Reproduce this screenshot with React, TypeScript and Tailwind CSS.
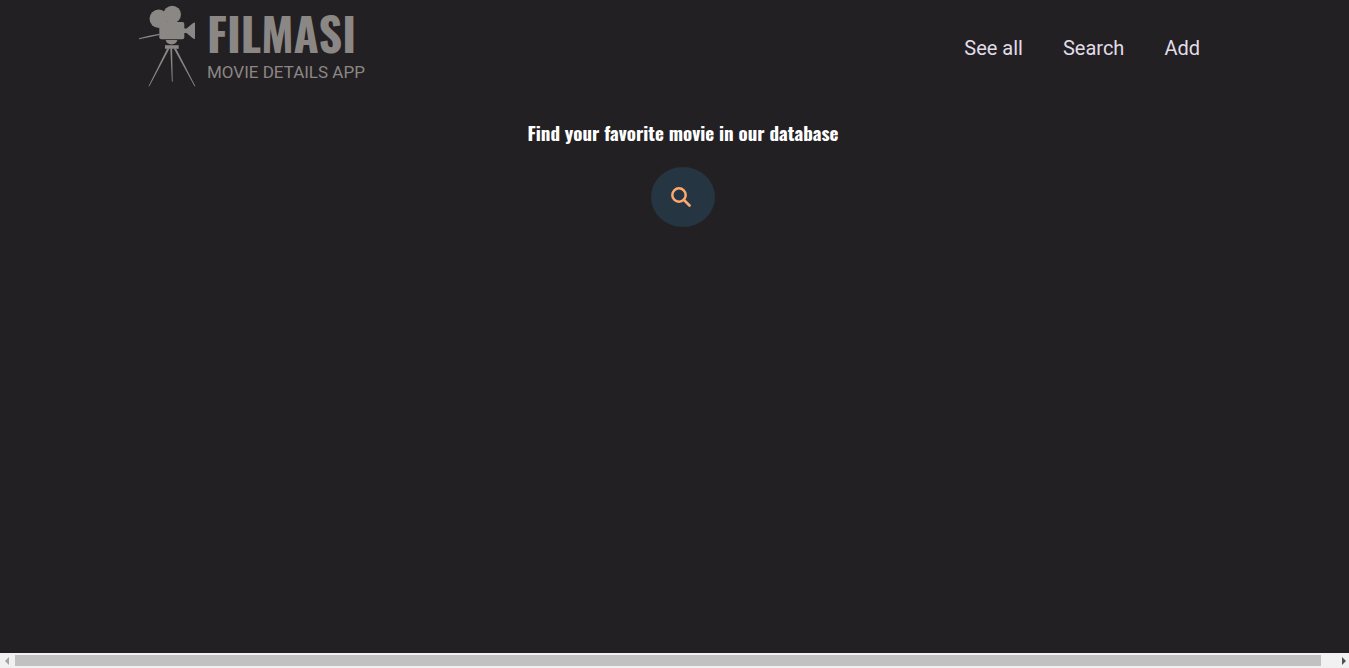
function CameraMark() {
  return (
    <svg viewBox="0 0 58 84" className="h-[84px] w-[58px] shrink-0 fill-[#8b8785]" aria-hidden="true">
      <circle cx="19.700" cy="14.700" r="9.200" />
      <circle cx="33.200" cy="10.500" r="8.800" />
      <path d="M20.300 18h23q2 0 2 2v13.300q0 2-2 2h-21q-2 0-2-2z" />
      <path d="M45 24.500h2.500l6-5q1.500-1 2.500-1v16.500q-1 0-2.500-1l-6-5H45z" />
      <path d="M20.500 29.800v1.300L11 33 0 35.200v-1l10-2.400z" />
      <path d="M26.700 36h11.600q-1 4.400-5.800 4.400T26.700 36z" />
      <path d="M26 41.200h13.700v3.600H26z" />
      <path d="M28.200 44.500h2.300L10.400 82.200h-.9z" />
      <path d="M31.300 44.500h1.800l.6 33.200h-.8z" />
      <path d="M34.800 44.500h2.300l19.300 37.700h-.9z" />
    </svg>
  );
}

function Logo() {
  return (
    <a href="#home" className="flex pt-1 text-[#8b8785]">
      <CameraMark />
      <span className="flex flex-col pl-2.5">
        <span className="font-['Oswald','Roboto',sans-serif] text-[46px] leading-14 font-bold">FILMASI</span>
        <span className="text-[17px] leading-6">MOVIE DETAILS APP</span>
      </span>
    </a>
  );
}

function SearchIcon() {
  return (
    <svg viewBox="0 0 20 20" className="size-5" fill="none" stroke="#fca96f" strokeWidth="2.500" aria-hidden="true">
      <circle cx="8" cy="8" r="6.700" />
      <path d="M13 13l5.500 5.500" strokeWidth="2.700" strokeLinecap="round" />
    </svg>
  );
}

const links = [
  { label: "See all", href: "#all" },
  { label: "Search", href: "#search" },
  { label: "Add", href: "#add" },
];

export default function App() {
  return (
    <div className="flex h-screen flex-col overflow-hidden bg-[#232023] font-['Roboto',sans-serif]">
      <div className="min-h-0 flex-1 overflow-hidden">
        <div className="w-[calc(100%+17px)]">
          <header className="flex h-24 items-start justify-between pr-[166px] pl-[139px]">
            <Logo />
            <nav className="flex h-24 items-center gap-10 text-xl text-[#e0dde9]">
              {links.map((link) => (
                <a key={link.label} href={link.href}>{link.label}</a>
              ))}
            </nav>
          </header>
          <main className="flex flex-col items-center pt-[22px]">
            <h3 className="font-['Oswald','Roboto',sans-serif] text-[19px] leading-7 font-bold text-white">
              Find your favorite movie in our database
            </h3>
            <button type="button" aria-label="Search" className="mt-[21px] flex h-15 w-16 items-center rounded-[50%] bg-[#253541] pl-5">
              <SearchIcon />
            </button>
          </main>
        </div>
      </div>
      <div className="flex h-[15px] shrink-0 items-center bg-[#f1f1f1]">
        <button type="button" aria-label="Scroll left" className="flex w-[15px] justify-center pr-0.5">
          <svg viewBox="0 0 4 8" className="h-2 w-1 fill-[#a3a3a3]"><path d="M4 0v8L0 4z" /></svg>
        </button>
        <div className="flex-1 pr-[13px]">
          <div className="h-[11px] bg-[#c1c1c1]" />
        </div>
        <button type="button" aria-label="Scroll right" className="flex w-[15px] justify-center pl-1">
          <svg viewBox="0 0 4 8" className="h-2 w-1 fill-[#505050]"><path d="M0 0v8l4-4z" /></svg>
        </button>
      </div>
    </div>
  );
}
